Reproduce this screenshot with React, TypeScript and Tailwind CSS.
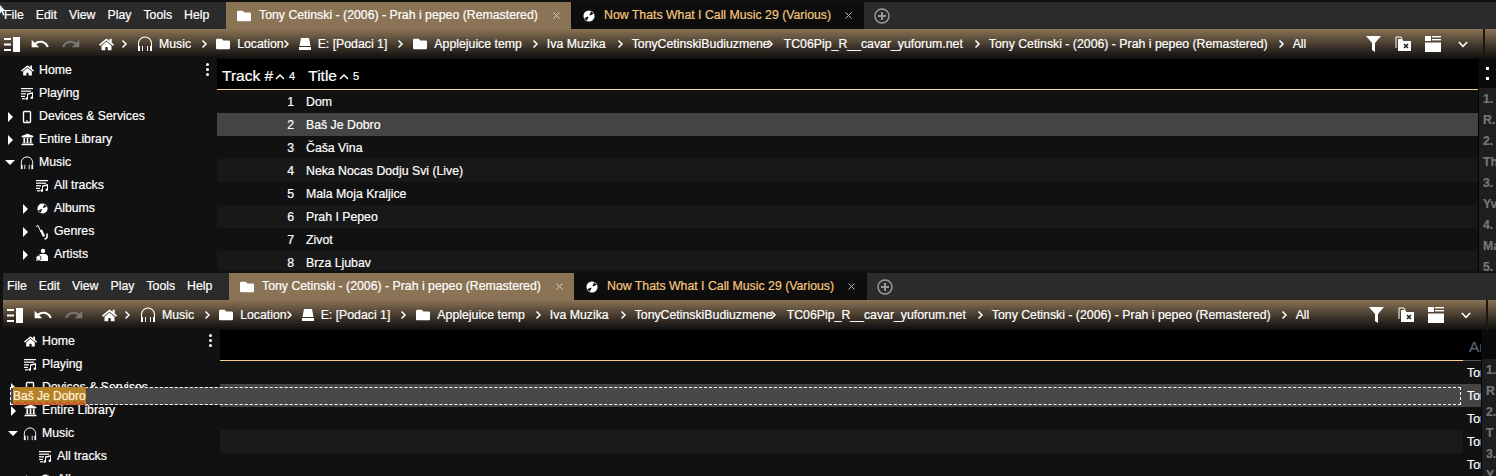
import type { ReactNode } from 'react';
import { FaFolder, FaHome, FaUniversity } from 'react-icons/fa';
import { MdRedo, MdUndo } from 'react-icons/md';

const ALBUM = 'Tony Cetinski - (2006) - Prah i pepeo (Remastered)';
const OTHER = 'Now Thats What I Call Music 29 (Various)';

const tracks = ['Dom', 'Baš Je Dobro', 'Čaša Vina', 'Neka Nocas Dodju Svi (Live)', 'Mala Moja Kraljice', 'Prah I Pepeo', 'Zivot', 'Brza Ljubav'];

function Headphones({ size = 16 }: { size?: number }) {
  return (
    <svg width={size} height={size} viewBox="0 0 16 16" fill="none" stroke="currentColor">
      <path d="M1.500 10V7.500a6.500 6.500 0 0 1 13 0V10" strokeWidth="1.100" />
      <rect x="1" y="10" width="2" height="5" fill="currentColor" stroke="none" />
      <rect x="5" y="10" width="1" height="5" fill="currentColor" stroke="none" />
      <rect x="10" y="10" width="1" height="5" fill="currentColor" stroke="none" />
      <rect x="13" y="10" width="2" height="5" fill="currentColor" stroke="none" />
    </svg>
  );
}

function Disc({ size = 14 }: { size?: number }) {
  return (
    <svg width={size} height={size} viewBox="0 0 14 14">
      <circle cx="7" cy="7" r="6.500" fill="currentColor" />
      <path d="M7 7 9.500 1.500 12.500 4.500zM7 7 4.500 12.500 1.500 9.500z" fill="#111" />
      <circle cx="7" cy="7" r="1.300" fill="currentColor" />
    </svg>
  );
}

function TrackList() {
  return (
    <svg width="14" height="13" viewBox="0 0 14 13" fill="currentColor">
      <rect x="1" y="1" width="12" height="1.200" />
      <rect x="1" y="3.600" width="10" height="1.200" />
      <rect x="1" y="6.200" width="5" height="1.200" />
      <rect x="1" y="8.800" width="4" height="1.200" />
      <rect x="2" y="11.200" width="3" height="1.200" />
      <path d="M7 6.500 13 5v6h-1V6.800L8 7.800V12H7z" />
      <circle cx="6.800" cy="11.600" r="1.300" />
      <circle cx="11.800" cy="10.800" r="1.300" />
    </svg>
  );
}

function Device() {
  return (
    <svg width="14" height="14" viewBox="0 0 14 14" fill="none" stroke="currentColor">
      <rect x="3.500" y="1.500" width="7" height="11" rx="1" strokeWidth="1.400" />
      <path d="M6 11h2" strokeWidth="1" />
    </svg>
  );
}

function Sax() {
  return (
    <svg width="14" height="16" viewBox="0 0 14 16" fill="none" stroke="currentColor">
      <path d="M1 2.500 3 1.500 6 8" strokeWidth="1" />
      <path d="M6 6 9 12.500" strokeWidth="2.400" />
      <path d="M9.500 15a2.600 2.600 0 0 0 2.600-2.800V9.500" strokeWidth="1.600" />
    </svg>
  );
}

function Artists() {
  return (
    <svg width="14" height="14" viewBox="0 0 14 14" fill="currentColor">
      <circle cx="8" cy="3" r="2.200" />
      <path d="M5 6h6l2 2v5H1V9z" />
      <circle cx="3.500" cy="10" r="2.600" stroke="#111" strokeWidth="0.800" />
    </svg>
  );
}

function PanelToggle() {
  return (
    <svg width="16" height="15" viewBox="0 0 16 15" fill="currentColor" className="shrink-0">
      <rect x="0" y="1" width="7" height="2" />
      <rect x="0" y="6.500" width="7" height="2" />
      <rect x="0" y="12" width="7" height="2" />
      <rect x="9" y="0" width="7" height="15" />
    </svg>
  );
}

function Drive() {
  return (
    <svg width="14" height="14" viewBox="0 0 14 14" fill="currentColor">
      <path d="M3 1h8l1.500 8h-11z" />
      <rect x="1" y="10" width="12" height="3" />
    </svg>
  );
}

function Filter() {
  return (
    <svg width="15" height="16" viewBox="0 0 15 16" fill="currentColor">
      <path d="M0 0h15L9 7v9L6 14V7z" />
    </svg>
  );
}

function CloseFolder() {
  return (
    <svg width="16" height="16" viewBox="0 0 16 16">
      <path d="M1 12V1h5l1 2" fill="none" stroke="currentColor" strokeWidth="1" />
      <path d="M3 15V3h4l1.500 2H16v10z" fill="currentColor" />
      <path d="M9 8l4 4M13 8l-4 4" stroke="#222" strokeWidth="1.600" />
    </svg>
  );
}

function LayoutIcon() {
  return (
    <svg width="16" height="16" viewBox="0 0 16 16" fill="currentColor">
      <rect x="0" y="0" width="6" height="5" />
      <rect x="7" y="0" width="9" height="1.400" />
      <rect x="7" y="3" width="9" height="1.400" />
      <rect x="0" y="6.500" width="16" height="9.500" />
    </svg>
  );
}

function Chevron({ className = '' }: { className?: string }) {
  return (
    <svg width="7" height="10" viewBox="0 0 7 10" fill="none" stroke="currentColor" strokeWidth="1.500" className={`shrink-0 ${className}`}>
      <path d="M1.500 1.500 5 5 1.500 8.500" />
    </svg>
  );
}

function CloseX({ className = '' }: { className?: string }) {
  return (
    <svg width="7" height="7" viewBox="0 0 7 7" fill="none" stroke="currentColor" className={`shrink-0 ${className}`}>
      <path d="M.5.500l6 6M6.500.500l-6 6" />
    </svg>
  );
}

function Crumb({ label, chevron = 'ml-[10px] mr-[8px]' }: { label: string; chevron?: string }) {
  return (
    <>
      <span className="whitespace-nowrap">{label}</span>
      {label !== 'All' && <Chevron className={chevron} />}
    </>
  );
}

function Toolbar() {
  return (
    <div className="flex h-[30px] items-center bg-gradient-to-b from-[#8b7355] to-[#0e0e0e] text-white">
      <div className="ml-[4px] flex w-[95px] shrink-0 items-center">
        <PanelToggle />
        <MdUndo size={20} className="ml-[10px]" />
        <MdRedo size={20} className="ml-[11px] text-[#777]" />
      </div>
      <FaHome size={15} className="mr-[7px] shrink-0" />
      <Chevron className="mr-[9px]" />
      <span className="mr-[6px] shrink-0"><Headphones /></span>
      <Crumb label="Music" />
      <FaFolder size={14} className="mr-[7px] shrink-0" />
      <Crumb label="Location" chevron="-ml-[1px] mr-[8px]" />
      <span className="mr-[6px] shrink-0"><Drive /></span>
      <Crumb label="E: [Podaci 1]" chevron="ml-[10px] mr-[9px]" />
      <FaFolder size={14} className="mr-[7px] shrink-0" />
      <Crumb label="Applejuice temp" />
      <Crumb label="Iva Muzika" chevron="ml-[11px] mr-[8px]" />
      <Crumb label="TonyCetinskiBudiuzmene" chevron="-ml-[3px] mr-[10px]" />
      <Crumb label="TC06Pip_R__cavar_yuforum.net" chevron="ml-[11px] mr-[8px]" />
      <Crumb label={ALBUM} />
      <Crumb label="All" />
      <div className="ml-auto mr-[15px] flex shrink-0 items-center">
        <Filter />
        <span className="ml-[14px]"><CloseFolder /></span>
        <span className="ml-[14px]"><LayoutIcon /></span>
        <svg width="10" height="7" viewBox="0 0 10 7" fill="none" stroke="currentColor" strokeWidth="1.600" className="ml-[17px]">
          <path d="M.8 1 5 5.300 9.200 1" />
        </svg>
      </div>
      <div className="h-full w-[2px] shrink-0 bg-[#1c1710]" />
      <div className="w-[11px] shrink-0" />
    </div>
  );
}

function MenuBar() {
  return (
    <div className="flex h-[27px] items-stretch bg-[#2b2b2b] text-white">
      <div className="flex w-[226px] items-center gap-[12px] pl-[4px]">
        {['File', 'Edit', 'View', 'Play', 'Tools', 'Help'].map((m) => (
          <span key={m}>{m}</span>
        ))}
      </div>
      <div className="flex w-[345px] items-center bg-[#8b7355] pl-[11px]">
        <FaFolder size={14} className="mr-[8px]" />
        <span className="whitespace-nowrap">{ALBUM}</span>
        <CloseX className="ml-[15px] text-[#d8cfc0]" />
      </div>
      <div className="flex w-[293px] items-center bg-[#0d0d0d] pl-[12px] text-[#f5c77e]">
        <span className="mr-[9px] text-white"><Disc size={12} /></span>
        <span className="whitespace-nowrap">{OTHER}</span>
        <CloseX className="ml-[14px] text-[#bbb]" />
      </div>
      <div className="flex items-center pl-[10px] text-[#999]">
        <svg width="16" height="16" viewBox="0 0 16 16" fill="none" stroke="currentColor" strokeWidth="1.500">
          <circle cx="8" cy="8" r="7" />
          <path d="M8 4v8M4 8h8" strokeWidth="2" />
        </svg>
      </div>
    </div>
  );
}

function SideItem({ indent, arrow, icon, label }: { indent: string; arrow?: 'right' | 'down'; icon: ReactNode; label: string }) {
  return (
    <div className={`flex h-[23px] items-center text-white ${indent}`}>
      <span className="flex w-[10px] shrink-0 justify-center">
        {arrow === 'right' && <span className="h-0 w-0 border-y-[5px] border-l-[5px] border-y-transparent border-l-white" />}
        {arrow === 'down' && <span className="h-0 w-0 border-x-[5px] border-t-[5px] border-x-transparent border-t-white" />}
      </span>
      <span className="ml-[5px] flex w-[14px] shrink-0 justify-center">{icon}</span>
      <span className="ml-[5px] whitespace-nowrap">{label}</span>
    </div>
  );
}

function Sidebar() {
  return (
    <div className="relative w-[217px] shrink-0">
      <span className="absolute right-[8px] top-[4px] flex flex-col gap-[2px]">
        <i className="h-[3px] w-[3px] rounded-full bg-white" />
        <i className="h-[3px] w-[3px] rounded-full bg-white" />
        <i className="h-[3px] w-[3px] rounded-full bg-white" />
      </span>
      <SideItem indent="pl-[5px]" icon={<FaHome size={13} />} label="Home" />
      <SideItem indent="pl-[5px]" icon={<TrackList />} label="Playing" />
      <SideItem indent="pl-[5px]" arrow="right" icon={<Device />} label="Devices & Services" />
      <SideItem indent="pl-[5px]" arrow="right" icon={<FaUniversity size={13} />} label="Entire Library" />
      <SideItem indent="pl-[5px]" arrow="down" icon={<Headphones size={14} />} label="Music" />
      <SideItem indent="pl-[20px]" icon={<TrackList />} label="All tracks" />
      <SideItem indent="pl-[20px]" arrow="right" icon={<Disc size={11} />} label="Albums" />
      <SideItem indent="pl-[20px]" arrow="right" icon={<Sax />} label="Genres" />
      <SideItem indent="pl-[20px]" arrow="right" icon={<Artists />} label="Artists" />
    </div>
  );
}

function PeekPanel({ items, showDots }: { items: string[]; showDots?: boolean }) {
  return (
    <div className="w-[18px] shrink-0 overflow-hidden border-l border-[#050505] bg-[#1e1e1e] font-bold text-[#777777]">
      <div className="flex h-[29px] items-center bg-[#0a0a0a] pl-[7px]">
        {showDots && <span className="h-[13px] w-[3px] border-y-[3px] border-white bg-[#0a0a0a]" />}
      </div>
      <div className="pl-[4px]">
        {items.map((t) => (
          <div key={t} className="flex h-[21px] items-center whitespace-nowrap pt-[1px]">{t}</div>
        ))}
      </div>
    </div>
  );
}

function SortArrow() {
  return (
    <svg width="10" height="6" viewBox="0 0 10 6" fill="none" stroke="currentColor" strokeWidth="1.500" className="ml-[2px] mt-[2px]">
      <path d="M1 5l4-4 4 4" />
    </svg>
  );
}

function TopList() {
  return (
    <div className="flex min-w-0 flex-1">
      <div className="min-w-0 flex-1">
        <div className="flex h-[31px] items-center border-b border-[#f5cf94] bg-black pt-[3px] text-white">
          <span className="ml-[5px] text-[15.500px]">Track #</span>
          <SortArrow />
          <span className="ml-[4px] mt-[1px] text-[11px]">4</span>
          <span className="ml-[13px] text-[15.500px]">Title</span>
          <SortArrow />
          <span className="ml-[4px] mt-[1px] text-[11px]">5</span>
        </div>
        {tracks.map((t, i) => (
          <div
            key={t}
            className={`flex h-[23px] items-center pt-[1px] text-white ${i === 1 ? 'bg-[#444444]' : i % 2 === 1 ? 'bg-[#181818]' : 'bg-[#111111]'}`}
          >
            <span className="w-[77px] text-right">{i + 1}</span>
            <span className="ml-[12px] whitespace-nowrap">{t}</span>
          </div>
        ))}
      </div>
      <PeekPanel items={['1.', 'R.', '2.', 'Th', '3.', 'Yv', '4.', 'Ma', '5.']} showDots />
    </div>
  );
}

function BottomList() {
  return (
    <div className="flex min-w-0 flex-1">
      <div className="min-w-0 flex-1">
        <div className="flex h-[31px]">
          <div className="flex-1 border-b border-[#f5cf94] bg-black" />
          <div className="flex w-[18px] items-center overflow-hidden border-b border-[#555] bg-black pl-[6px] pt-[3px] text-[15.500px] text-[#5c6670]">Ar</div>
        </div>
        {[0, 1, 2, 3, 4].map((i) => (
          <div key={i} className={`flex h-[23px] ${i === 1 ? 'bg-[#444444]' : i === 3 ? 'bg-[#1a1a1a]' : 'bg-[#111111]'}`}>
            <div className="flex-1" />
            <div className={`flex w-[18px] items-center overflow-hidden whitespace-nowrap pl-[4px] pt-[1px] text-white ${i === 1 ? 'bg-[#444444]' : 'bg-[#111111]'}`}>Tony</div>
          </div>
        ))}
      </div>
      <PeekPanel items={['1.', 'R', '2.', 'T', '3.', 'Y']} />
    </div>
  );
}

export default function App() {
  return (
    <div className="relative h-[476px] w-[1496px] overflow-hidden bg-[#111111] font-['Liberation_Sans',sans-serif] text-[12.300px] [-webkit-text-stroke:0.2px]">
      <div className="h-[271px] w-[1496px] overflow-hidden">
        <div className="h-[2px] bg-[#111111]" />
        <MenuBar />
        <Toolbar />
        <div className="flex">
          <Sidebar />
          <TopList />
        </div>
      </div>
      <div className="ml-[3px] h-[205px] w-[1496px] overflow-hidden">
        <div className="h-[2px] bg-[#111111]" />
        <MenuBar />
        <Toolbar />
        <div className="flex">
          <Sidebar />
          <BottomList />
        </div>
      </div>
      {/* mouse pointer caught in the capture */}
      <svg width="6" height="11" viewBox="0 0 6 11" fill="white" className="absolute left-0 top-[5px]">
        <path d="M0 0 5.500 6H3l1.500 4-1.500.6L1.700 6.700 0 8.500z" />
      </svg>
      {/* inline title editor over the selected row */}
      <div className="absolute left-[10px] top-[387px] flex h-[18px] w-[1451px] items-center border border-dashed border-white bg-[#484848] pl-[2px]">
        <span className="bg-[#b5822a] text-[12px] text-[#fff2dc] underline decoration-[#d33] decoration-wavy">Baš Je Dobro</span>
      </div>
    </div>
  );
}
